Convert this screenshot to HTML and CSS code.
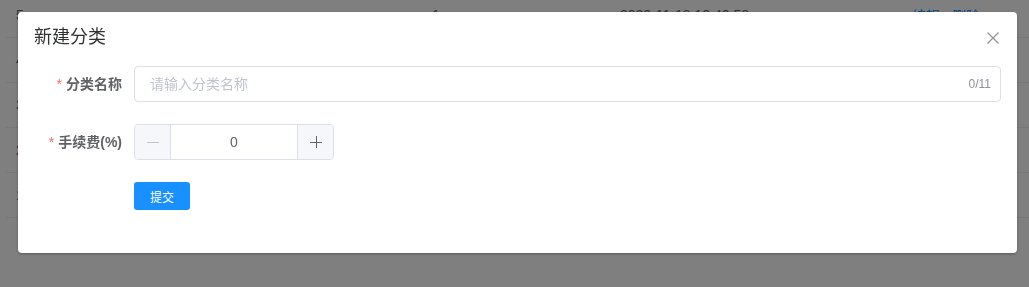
FILE: index.html
```html
<!DOCTYPE html>
<html>
<head>
    <link rel="stylesheet" href="styles.css">
</head>
<body>
    <div class="table">
        <div class="row">
            <span>5</span>
            <span>1</span>
            <span>2022-11-18 10:40:58</span>
            <span class="ops"><a>编辑</a><a>删除</a></span>
        </div>
        <div class="row">
            <span>4</span>
            <span>1</span>
            <span>2022-11-18 10:40:12</span>
            <span class="ops"><a>编辑</a><a>删除</a></span>
        </div>
        <div class="row">
            <span>3</span>
            <span>1</span>
            <span>2022-11-17 16:22:05</span>
            <span class="ops"><a>编辑</a><a>删除</a></span>
        </div>
        <div class="row">
            <span>2</span>
            <span>1</span>
            <span>2022-11-17 16:21:47</span>
            <span class="ops"><a>编辑</a><a>删除</a></span>
        </div>
        <div class="row">
            <span>1</span>
            <span>1</span>
            <span>2022-11-17 16:20:31</span>
            <span class="ops"><a>编辑</a><a>删除</a></span>
        </div>
    </div>

    <div class="mask"></div>

    <div class="dialog-wrap">
        <div class="dialog">
            <div class="dialog-header">
                <span class="dialog-title">新建分类</span>
                <svg class="close" width="12" height="12" viewBox="0 0 12 12">
                    <path d="M0.5 0.5L11.5 11.5M11.5 0.5L0.5 11.5" stroke="#909399" stroke-width="1.2" fill="none"/>
                </svg>
            </div>
            <div class="dialog-body">
                <div class="form-item">
                    <label class="form-label"><span class="req">*</span>分类名称</label>
                    <div class="input">
                        <input type="text" placeholder="请输入分类名称">
                        <span class="count">0/11</span>
                    </div>
                </div>
                <div class="form-item">
                    <label class="form-label"><span class="req">*</span>手续费(%)</label>
                    <div class="number">
                        <span class="step step-minus">
                            <svg width="12" height="12" viewBox="0 0 12 12">
                                <path d="M0 6.5H12" stroke="#C0C4CC" stroke-width="1"/>
                            </svg>
                        </span>
                        <span class="value">0</span>
                        <span class="step step-plus">
                            <svg width="12" height="12" viewBox="0 0 12 12">
                                <path d="M0 6.5H12M6.5 0V12" stroke="#606266" stroke-width="1"/>
                            </svg>
                        </span>
                    </div>
                </div>
                <div class="form-item">
                    <div class="form-label"></div>
                    <button class="btn">提交</button>
                </div>
            </div>
        </div>
    </div>
</body>
</html>
```

FILE: styles.css
```css
body {
    margin: 0;
    font-family: "Liberation Sans", "Noto Sans CJK SC", sans-serif;
    background: #fff;
    overflow: hidden;
}

.table {
    margin: -7px 0 0 6px;
}

.row {
    display: grid;
    grid-template-columns: 416px 188px 292px 1fr;
    align-items: center;
    height: 44px;
    padding-left: 10px;
    border-bottom: 1px solid #ebeef5;
    font-size: 14px;
    color: #606266;
}

.ops a {
    color: #1890ff;
    margin-right: 12px;
}

.mask {
    position: fixed;
    top: 0;
    left: 0;
    right: 0;
    bottom: 0;
    background: rgba(0, 0, 0, 0.5);
}

.dialog-wrap {
    position: fixed;
    top: 0;
    left: 0;
    right: 0;
    bottom: 0;
    padding: 12px 0 0 18px;
}

.dialog {
    width: 999px;
    background: #fff;
    border-radius: 4px;
    box-shadow: 0 1px 3px rgba(0, 0, 0, 0.3);
}

.dialog-header {
    display: flex;
    justify-content: space-between;
    align-items: center;
    padding: 13px 18px 0 16px;
}

.dialog-title {
    font-size: 18px;
    line-height: 24px;
    color: #303133;
}

.close {
    margin-top: 2px;
}

.dialog-body {
    padding: 17px 16px 13px;
}

.form-item {
    display: flex;
    align-items: flex-start;
    margin-bottom: 22px;
    min-height: 36px;
}

.form-label {
    width: 100px;
    flex: none;
    box-sizing: border-box;
    padding-right: 12px;
    text-align: right;
    font-size: 14px;
    font-weight: bold;
    line-height: 36px;
    color: #606266;
}

.req {
    color: #f56c6c;
    font-weight: normal;
    margin-right: 4px;
}

.input {
    flex: 1;
    display: flex;
    align-items: center;
    height: 36px;
    box-sizing: border-box;
    border: 1px solid #dcdfe6;
    border-radius: 4px;
}

.input input {
    flex: 1;
    border: none;
    outline: none;
    padding: 0 15px;
    font-family: inherit;
    font-size: 14px;
    color: #606266;
    background: transparent;
}

.input input::placeholder {
    color: #c0c4cc;
}

.count {
    font-size: 12px;
    color: #909399;
    padding-right: 9px;
}

.number {
    display: flex;
    width: 200px;
    height: 36px;
    box-sizing: border-box;
    border: 1px solid #dcdfe6;
    border-radius: 4px;
    overflow: hidden;
}

.step {
    width: 35px;
    display: flex;
    align-items: center;
    justify-content: center;
    background: #f5f7fa;
}

.step-minus {
    border-right: 1px solid #dcdfe6;
}

.step-plus {
    border-left: 1px solid #dcdfe6;
}

.value {
    flex: 1;
    text-align: center;
    font-size: 14px;
    line-height: 34px;
    color: #606266;
}

.btn {
    width: 56px;
    height: 28px;
    padding: 0;
    border: none;
    border-radius: 3px;
    background: #1890ff;
    color: #fff;
    font-family: inherit;
    font-size: 12px;
}
```
